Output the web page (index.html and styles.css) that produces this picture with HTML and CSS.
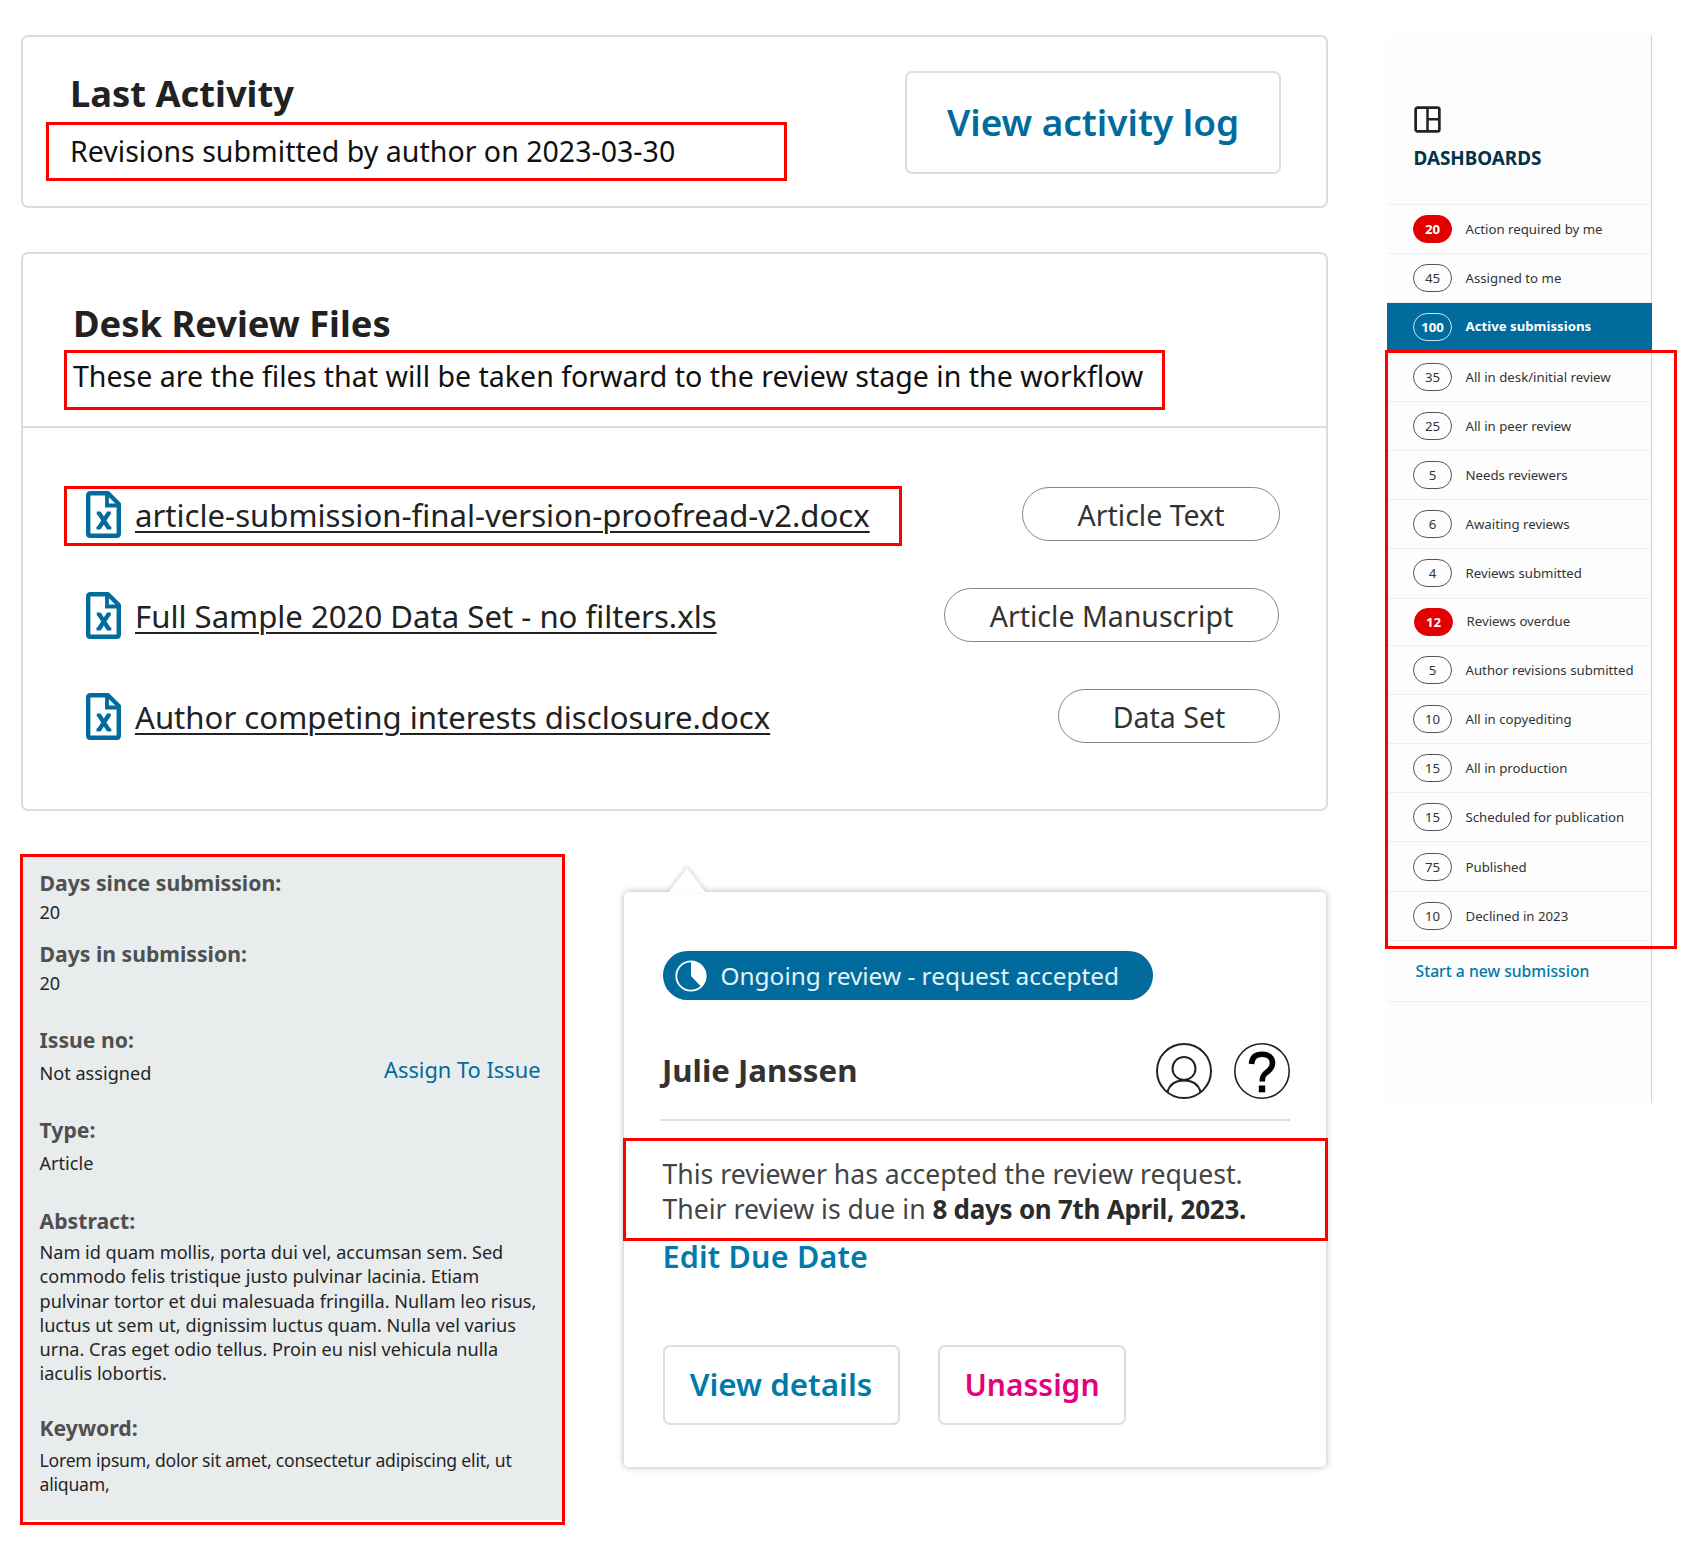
FILE: index.html
```html
<!DOCTYPE html>
<html lang="en">
<head>
<meta charset="utf-8">
<title>Submission overview</title>
<link rel="stylesheet" href="styles.css">
</head>
<body>
<svg class="defs" width="0" height="0" aria-hidden="true">
  <symbol id="file" viewBox="0 0 35 47">
    <path d="M4.500 2.200H22L32.800 13V42.500Q32.800 44.800 30.500 44.800H4.500Q2.200 44.800 2.200 42.500V4.500Q2.200 2.200 4.500 2.200Z" fill="none" stroke="#006b9c" stroke-width="4.400" stroke-linejoin="round"/>
    <path d="M21 2V14.500H33" fill="none" stroke="#006b9c" stroke-width="3.800"/>
    <path d="M13 22L22.700 37M22.700 22L13 37" fill="none" stroke="#006b9c" stroke-width="4.300"/>
    <path d="M10.800 22H14.500M21 22H24.800M10.500 37H14.500M21.300 37H25.300" fill="none" stroke="#006b9c" stroke-width="2.800"/>
  </symbol>
</svg>
<div class="page">
  <main class="main">
    <section class="card activity">
      <div>
        <h2 class="title">Last Activity</h2>
        <p class="lead">Revisions submitted by author on 2023-03-30</p>
      </div>
      <button class="btn btn-lg">View activity log</button>
      <span class="mark mark-activity"></span>
    </section>

    <section class="card files">
      <header class="files-head">
        <h2 class="title">Desk Review Files</h2>
        <p class="lead">These are the files that will be taken forward to the review stage in the workflow</p>
        <span class="mark mark-desc"></span>
      </header>
      <ul class="file-list">
        <li class="file">
          <svg class="file-icon"><use href="#file"/></svg>
          <a class="file-name">article-submission-final-version-proofread-v2.docx</a>
          <span class="pill pill-text">Article Text</span>
          <span class="mark mark-file"></span>
        </li>
        <li class="file">
          <svg class="file-icon"><use href="#file"/></svg>
          <a class="file-name">Full Sample 2020 Data Set - no filters.xls</a>
          <span class="pill pill-manuscript">Article Manuscript</span>
        </li>
        <li class="file">
          <svg class="file-icon"><use href="#file"/></svg>
          <a class="file-name">Author competing interests disclosure.docx</a>
          <span class="pill pill-data">Data Set</span>
        </li>
      </ul>
    </section>

    <div class="lower">
      <section class="meta">
        <dl class="meta-body">
          <dt>Days since submission:</dt>
          <dd class="days">20</dd>
          <dt>Days in submission:</dt>
          <dd class="days-in">20</dd>
          <dt>Issue no:</dt>
          <dd class="issue"><span>Not assigned</span><a class="assign">Assign To Issue</a></dd>
          <dt>Type:</dt>
          <dd class="type">Article</dd>
          <dt>Abstract:</dt>
          <dd class="abstract">Nam id quam mollis, porta dui vel, accumsan sem. Sed<br>commodo felis tristique justo pulvinar lacinia. Etiam<br>pulvinar tortor et dui malesuada fringilla. Nullam leo risus,<br>luctus ut sem ut, dignissim luctus quam. Nulla vel varius<br>urna. Cras eget odio tellus. Proin eu nisl vehicula nulla<br>iaculis lobortis.</dd>
          <dt>Keyword:</dt>
          <dd class="keyword">Lorem ipsum, dolor sit amet, consectetur adipiscing elit, ut<br>aliquam,</dd>
        </dl>
      </section>

      <section class="popup">
        <svg class="arrow" viewBox="0 0 38 26"><path d="M0 26L19 1L38 26Z" fill="#fff"/></svg>
        <div class="status">
          <svg class="clock" viewBox="0 0 32 32"><circle cx="16" cy="16" r="14.700" fill="none" stroke="#fff" stroke-width="1.800"/><path d="M16 16V1.500A14.500 14.500 0 0 1 26 26.500Z" fill="#fff"/></svg>
          <span>Ongoing review - request accepted</span>
        </div>
        <div class="person">
          <h3 class="name">Julie Janssen</h3>
          <svg class="round" viewBox="0 0 56 56" fill="none" stroke="#222" stroke-width="2"><circle cx="28" cy="28" r="27"/><ellipse cx="28" cy="25.500" rx="11.500" ry="11.500"/><path d="M11.500 49C13.500 41.500 19 37.500 28 37.500S42.500 41.500 44.500 49"/></svg>
          <svg class="round" viewBox="0 0 56 56" fill="none"><circle cx="28" cy="28" r="27.200" stroke="#222" stroke-width="1.600"/><path d="M17.500 21C18 14 22 11.200 28 11.200C34.500 11.200 38.500 14.500 38.500 20C38.500 24.500 36 27 32.500 29.500C29 32 28.200 34 28.200 38.500" stroke="#000" stroke-width="5.600"/><rect x="24.800" y="42.500" width="6.400" height="6.800" fill="#000"/></svg>
        </div>
        <p class="note">This reviewer has accepted the review request.<br>Their review is due in <b>8 days on 7th April, 2023.</b></p>
        <a class="edit">Edit Due Date</a>
        <div class="actions">
          <button class="btn btn-details">View details</button>
          <button class="btn btn-unassign">Unassign</button>
        </div>
        <span class="mark mark-note"></span>
      </section>
    </div>
  </main>

  <aside class="side">
    <header class="side-head">
      <svg class="dash" viewBox="0 0 28 28" fill="none" stroke="#222"><rect x="1.700" y="1.700" width="24.600" height="24.600" rx="2" stroke-width="2.800"/><path d="M14 2V26M14 13.700H26" stroke-width="2.600"/></svg>
      <h1 class="side-title">DASHBOARDS</h1>
    </header>
    <ul class="nav">
      <li class="item"><span class="count alert">20</span>Action required by me</li>
      <li class="item"><span class="count">45</span>Assigned to me</li>
      <li class="item active"><span class="count">100</span><span class="label">Active submissions</span></li>
      <li class="item first"><span class="count">35</span>All in desk/initial review</li>
      <li class="item"><span class="count">25</span>All in peer review</li>
      <li class="item"><span class="count">5</span>Needs reviewers</li>
      <li class="item"><span class="count">6</span>Awaiting reviews</li>
      <li class="item tall"><span class="count">4</span>Reviews submitted</li>
      <li class="item overdue"><span class="count alert">12</span><span class="label">Reviews overdue</span></li>
      <li class="item"><span class="count">5</span>Author revisions submitted</li>
      <li class="item"><span class="count">10</span>All in copyediting</li>
      <li class="item"><span class="count">15</span>All in production</li>
      <li class="item"><span class="count">15</span>Scheduled for publication</li>
      <li class="item low"><span class="count">75</span>Published</li>
      <li class="item"><span class="count">10</span>Declined in 2023</li>
    </ul>
    <div class="new"><a>Start a new submission</a></div>
    <span class="mark mark-side"></span>
  </aside>
</div>
</body>
</html>
```
FILE: styles.css
```css
* { box-sizing: border-box; margin: 0; padding: 0; }
body {
  width: 1696px;
  height: 1544px;
  overflow: hidden;
  background: #fff;
  color: #1c1c1c;
  font-family: "Noto Sans", "Open Sans", sans-serif;
}
ul { list-style: none; }
a { white-space: nowrap; }
.defs { position: absolute; }

.page { display: flex; padding: 35px 0 0 21px; gap: 59px; }
.main { width: 1307px; flex: none; }
.card { position: relative; border: 2px solid #ddd; border-radius: 7px; }

/* Red annotation frames laid over the content */
.mark { position: absolute; border: 3px solid #f00; pointer-events: none; }
.mark-activity { left: 23px; top: 85px; width: 741px; height: 59px; }
.mark-desc { left: 41px; top: 96px; width: 1101px; height: 60px; }
.mark-file { left: -22px; top: -1px; width: 838px; height: 60px; }
.mark-note { left: -1px; top: 246px; width: 705px; height: 103px; }
.mark-side { left: -2px; top: 315px; width: 292px; height: 599px; }

.title { font-size: 36.300px; font-weight: 700; line-height: 50px; color: #222; white-space: nowrap; }
.lead { font-size: 28.550px; line-height: 40px; color: #111; white-space: nowrap; }

.btn {
  border: 2px solid #ddd;
  border-radius: 7px;
  background: #fff;
  color: #006b9c;
  font: 600 30px/1 "Noto Sans", sans-serif;
  white-space: nowrap;
}
.btn-lg { width: 376px; height: 103px; font-size: 36.900px; }

.activity {
  display: flex;
  justify-content: space-between;
  align-items: flex-start;
  height: 173px;
  padding: 34px 45px 0 47px;
}
.activity .title { margin-top: -3px; }
.activity .lead { margin-top: 13px; }

.files { height: 559px; margin-top: 44px; }
.files-head { position: relative; height: 174px; padding: 44px 0 0 50px; border-bottom: 2px solid #ddd; }
.files-head .lead { margin-top: 8px; }
.file-list { padding: 59px 46px 0 63px; }
.file { position: relative; display: flex; align-items: center; height: 54px; margin-bottom: 47px; }
.file-icon { width: 35px; height: 47px; flex: none; margin: 1px 14px 0 0; }
.file-name {
  flex: 1;
  font-size: 31.140px;
  line-height: 54px;
  margin-top: 1px;
  color: #222;
  text-decoration: underline;
  text-decoration-thickness: 2px;
  text-underline-offset: 4px;
}
.pill {
  height: 54px;
  border: 1.500px solid #888;
  border-radius: 27px;
  font-size: 28.500px;
  line-height: 54px;
  color: #333;
  text-align: center;
}
.pill-text { width: 258px; }
.pill-manuscript { width: 335px; margin-right: 1px; }
.pill-data { width: 222px; }

.lower { display: flex; margin: 43px 0 0 -1px; gap: 59px; }
.meta { flex: none; width: 545px; height: 671px; border: 3px solid #f00; padding-bottom: 2px; }
.meta-body { height: 663px; background: #e8eced; padding: 11px 0 0 16.500px; font-size: 18.120px; line-height: 24px; }
.meta dt { font-size: 21.200px; font-weight: 700; line-height: 30px; color: #505050; }
.meta dd { white-space: nowrap; color: #252525; }
.meta .days { margin: 2px 0 15px; }
.meta .days-in { margin: 2px 0 30px; }
.issue { display: flex; justify-content: space-between; margin: 6px 21.500px 30px 0; }
.assign { font-size: 21.800px; line-height: 17px; color: #006b9c; }
.type { margin: 6px 0 31px; }
.abstract { line-height: 24.250px; margin: 4px 0 27px; }
.keyword { line-height: 24.250px; margin-top: 5px; font-size: 17.600px; letter-spacing: -.210px; }

.popup {
  position: relative;
  flex: none;
  width: 702px;
  height: 575px;
  margin-top: 38px;
  padding: 59px 36px 0 38.500px;
  background: #fff;
  border-radius: 5px;
  box-shadow: 0 0 7px rgba(0, 0, 0, .3);
}
.arrow { position: absolute; left: 44px; top: -25px; width: 38px; height: 26px; filter: drop-shadow(0 -2px 2px rgba(0, 0, 0, .16)); }
.status {
  display: flex;
  align-items: center;
  gap: 13.500px;
  width: 490px;
  height: 49px;
  padding-left: 12.500px;
  border-radius: 25px;
  background: #006b9c;
  color: #e2f3fa;
  font-size: 24.400px;
  white-space: nowrap;
}
.clock { width: 32px; height: 32px; flex: none; }
.person { display: flex; align-items: center; gap: 22px; height: 121px; margin-left: -2px; padding-top: 23px; border-bottom: 2px solid #ddd; }
.name { flex: 1; margin: -3px 0 0 1.500px; font-size: 31.200px; font-weight: 700; color: #333; }
.round { width: 56px; height: 56px; flex: none; }
.note { margin-top: 36px; font-size: 26.600px; line-height: 35px; color: #444; white-space: nowrap; }
.note b { font-size: 26px; letter-spacing: -.270px; color: #2b2b2b; }
.edit { display: block; margin-top: 9px; font-size: 30.500px; font-weight: 600; letter-spacing: .200px; line-height: 40px; color: #007aaa; }
.actions { display: flex; gap: 38.500px; margin-top: 69px; }
.btn-details { width: 237px; height: 80px; font-size: 31.300px; color: #007aaa; }
.btn-unassign { width: 188px; height: 80px; color: #e6007e; }

.side { position: relative; width: 265px; height: 1068px; background: #fdfdfd; border-right: 1px solid #d5d5d5; }
.side-head { height: 170px; padding: 71px 0 0 26.500px; border-bottom: 1px solid #f1f1f1; }
.dash { display: block; width: 27px; height: 27px; }
.side-title { margin-top: 13px; font-size: 18.850px; line-height: 24px; color: #003449; }
.item {
  display: flex;
  align-items: center;
  gap: 13.500px;
  height: 49px;
  padding-left: 26px;
  border-bottom: 1px solid #efefef;
  font-size: 13.220px;
  color: #333;
  white-space: nowrap;
}
.count {
  width: 39px;
  height: 28px;
  border: 1px solid #555;
  border-radius: 14px;
  line-height: 26px;
  text-align: center;
}
.label { padding-bottom: 2px; }
.alert { border-color: #e30000; background: #e30000; color: #fff; font-weight: 700; }
.active { height: 47px; border: 0; margin-right: -1px; background: #006b9c; color: #fff; font-weight: 700; }
.active .count { border-color: #cfe6f0; }
.first { height: 52px; padding-top: 3px; }
.tall { height: 50px; padding-bottom: 1px; }
.overdue { height: 47px; padding-left: 27px; padding-bottom: 1px; }
.low { height: 50px; padding-top: 1px; }
.new { height: 61px; padding: 18px 0 0 28.500px; border-bottom: 1px solid #efefef; font-size: 15.700px; line-height: 24px; font-weight: 500; color: #007aaa; }
```
